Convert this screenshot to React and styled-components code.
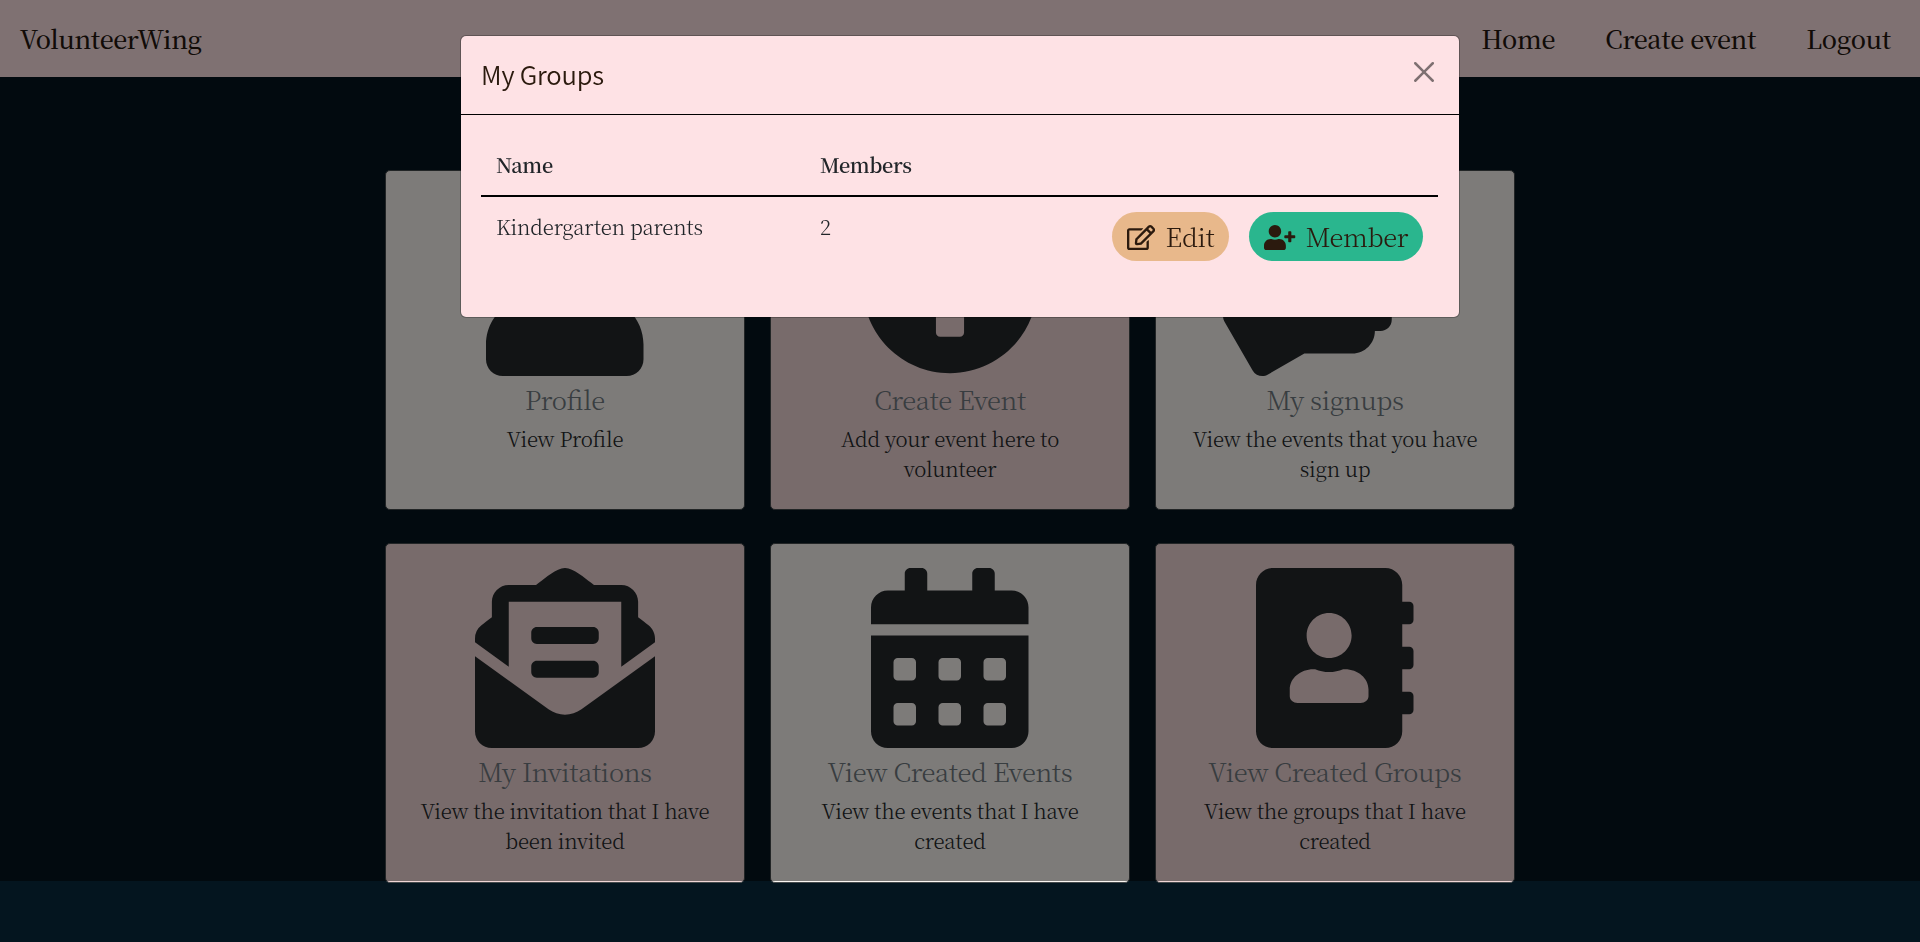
import React from "react";
import styled, { createGlobalStyle } from "styled-components";
import {
  FaUser,
  FaPlusCircle,
  FaHandsHelping,
  FaEnvelopeOpenText,
  FaCalendarAlt,
  FaAddressBook,
  FaRegEdit,
  FaUserPlus,
} from "react-icons/fa";

const serif = '"Noto Serif CJK SC", "Noto Serif", "Liberation Serif", serif';
const sans = '"Noto Sans CJK SC", "Noto Sans", sans-serif';
const ink = "#2b1a0e";

const GlobalStyle = createGlobalStyle`
  *, *::before, *::after { box-sizing: border-box; }
  html, body { height: 100%; overflow: hidden; }
  body {
    margin: 0;
    background: #04151f;
    color: #212529;
    font-family: ${serif};
    font-feature-settings: "liga" 1;
  }
  h3, h5, p { margin: 0; }
`;

const Navbar = styled.nav`
  display: flex;
  align-items: center;
  justify-content: space-between;
  height: 77px;
  padding: 0 29px 1px 20px;
  background: #fee2e5;
  color: #24160f;
  font-size: 25.2px;
  font-weight: 500;
  letter-spacing: -0.42px;
  line-height: 38px;
`;

const NavLinks = styled.div`
  display: flex;
  gap: 50px;
  letter-spacing: -0.27px;
`;

const CardGrid = styled.main`
  display: grid;
  grid-template-columns: repeat(3, 360px);
  grid-auto-rows: 340px;
  gap: 32.5px 25px;
  margin: 93.4px 0 0 385px;
`;

const Card = styled.article`
  display: flex;
  flex-direction: column;
  align-items: center;
  padding: 24.4px 24px 24px;
  border: 1px solid #454a4c;
  border-radius: 5px;
  background: ${(p) => (p.$pink ? "#f0d6d6" : "#faf6f2")};
  color: #24282b;
  text-align: center;

  svg {
    flex: none;
    width: ${(p) => p.$iconWidth}px;
    height: 180px;
  }
`;

const CardTitle = styled.h5`
  margin-top: 7.8px;
  color: #707a81;
  font-size: 25.7px;
  font-weight: 300;
  letter-spacing: -0.38px;
  line-height: 30px;
`;

const CardText = styled.p`
  margin-top: 9.1px;
  font-size: 20.5px;
  font-weight: 300;
  letter-spacing: -0.27px;
  line-height: 30px;
`;

const Backdrop = styled.div`
  position: fixed;
  top: 0;
  left: 0;
  width: 100%;
  height: 881px;
  background: rgba(0, 0, 0, 0.5);
`;

const Dialog = styled.section`
  position: fixed;
  top: 35px;
  left: 460px;
  width: 1000px;
  height: 283px;
  border: 1px solid rgba(0, 0, 0, 0.25);
  border-radius: 6px;
  background: #fee2e5;
  background-clip: padding-box;
`;

const DialogHeader = styled.header`
  display: flex;
  justify-content: space-between;
  height: 79px;
  padding: 20px;
  border-bottom: 1px solid #000;
`;

const DialogTitle = styled.h3`
  color: ${ink};
  font-family: ${sans};
  font-size: 25.6px;
  font-weight: 350;
  letter-spacing: -0.2px;
  line-height: 36px;
`;

const CloseButton = styled.button`
  display: flex;
  width: 30px;
  height: 30px;
  padding: 5.5px 5px;
  border: 0;
  background: none;
  opacity: 0.5;
`;

const Table = styled.div`
  padding: 20px 21px 20px 20px;
`;

const Row = styled.div`
  display: grid;
  grid-template-columns: 324px 1fr auto;
  align-items: start;
  padding: 15px;
  font-size: 20.5px;
  font-weight: 300;
  letter-spacing: -0.24px;
  line-height: 29px;
`;

const HeadRow = styled(Row)`
  border-bottom: 2px solid #000;
  font-size: 20px;
  font-weight: 600;
  letter-spacing: -0.36px;
  line-height: 30px;
`;

const Actions = styled.div`
  display: flex;
  gap: 20px;
`;

const PillButton = styled.button`
  display: flex;
  align-items: center;
  gap: ${(p) => p.$gap}px;
  height: 49px;
  padding: 0 15px;
  border: 0;
  border-radius: 25px;
  background: ${(p) => p.$bg};
  color: ${ink};
  font-family: ${serif};
  font-size: 25.7px;
  font-weight: 300;
  letter-spacing: -0.4px;
  line-height: 47px;

  svg {
    flex: none;
    width: ${(p) => p.$iconWidth}px;
    height: 25px;
    margin-top: 1px;
  }

  span {
    padding-bottom: 2px;
  }
`;

const cards = [
  { Icon: FaUser, width: 157.5, title: "Profile", text: "View Profile" },
  { Icon: FaPlusCircle, width: 180, title: "Create Event", text: "Add your event here to volunteer", pink: true },
  { Icon: FaHandsHelping, width: 225, title: "My signups", text: "View the events that you have sign up" },
  { Icon: FaEnvelopeOpenText, width: 180, title: "My Invitations", text: "View the invitation that I have been invited", pink: true },
  { Icon: FaCalendarAlt, width: 157.5, title: "View Created Events", text: "View the events that I have created" },
  { Icon: FaAddressBook, width: 157.5, title: "View Created Groups", text: "View the groups that I have created", pink: true },
];

export default function App() {
  return (
    <>
      <GlobalStyle />
      <Navbar>
        <span>VolunteerWing</span>
        <NavLinks>
          <span>Home</span>
          <span>Create event</span>
          <span>Logout</span>
        </NavLinks>
      </Navbar>
      <CardGrid>
        {cards.map(({ Icon, width, title, text, pink }) => (
          <Card key={title} $pink={pink} $iconWidth={width}>
            <Icon />
            <CardTitle>{title}</CardTitle>
            <CardText>{text}</CardText>
          </Card>
        ))}
      </CardGrid>
      <Backdrop />
      <Dialog>
        <DialogHeader>
          <DialogTitle>My Groups</DialogTitle>
          <CloseButton aria-label="Close">
            <svg viewBox="0 0 16 16" width="20" height="20" fill="#000">
              <path d="M.293.293a1 1 0 011.414 0L8 6.586 14.293.293a1 1 0 111.414 1.414L9.414 8l6.293 6.293a1 1 0 01-1.414 1.414L8 9.414l-6.293 6.293a1 1 0 01-1.414-1.414L6.586 8 .293 1.707a1 1 0 010-1.414z" />
            </svg>
          </CloseButton>
        </DialogHeader>
        <Table>
          <HeadRow>
            <span>Name</span>
            <span>Members</span>
          </HeadRow>
          <Row>
            <span>Kindergarten parents</span>
            <span>2</span>
            <Actions>
              <PillButton $bg="#e8b88b" $iconWidth={28.1} $gap={10.5}>
                <FaRegEdit />
                <span>Edit</span>
              </PillButton>
              <PillButton $bg="#2ab68e" $iconWidth={31.25} $gap={10}>
                <FaUserPlus />
                <span>Member</span>
              </PillButton>
            </Actions>
          </Row>
        </Table>
      </Dialog>
    </>
  );
}
